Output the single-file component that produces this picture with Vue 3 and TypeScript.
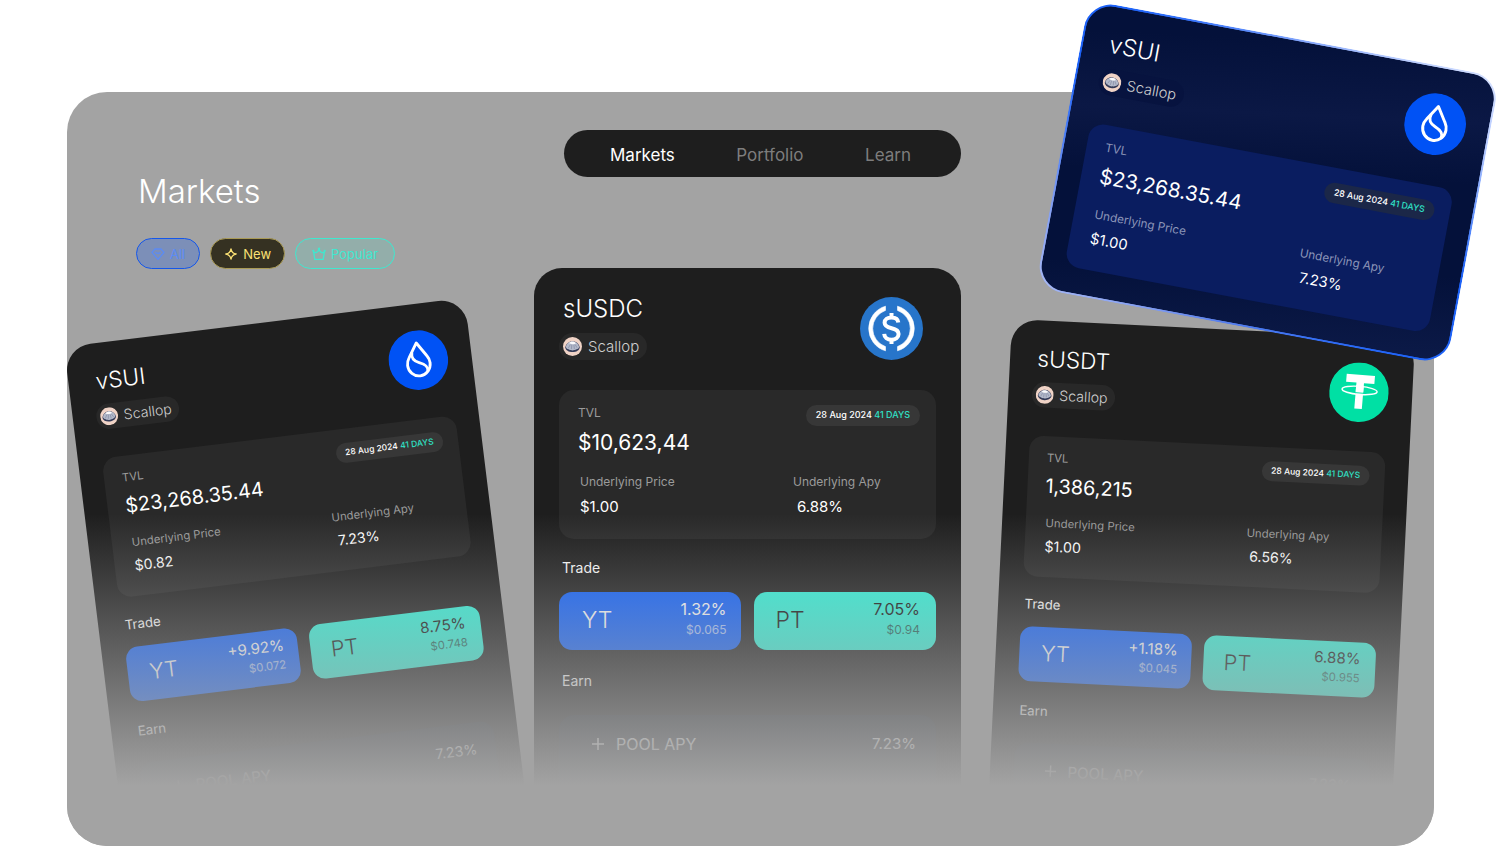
<script setup lang="ts">
type Coin = 'sui' | 'usdc' | 'usdt'

interface Leg {
  rate: string
  price: string
}

interface Market {
  id: string
  name: string
  coin: Coin
  place: 'left' | 'middle' | 'right' | 'featured'
  tvl: string
  price: string
  apy: string
  yt?: Leg
  pt?: Leg
}

const tabs: string[] = ['Markets', 'Portfolio', 'Learn']

const filters: { id: string; label: string }[] = [
  { id: 'all', label: 'All' },
  { id: 'new', label: 'New' },
  { id: 'popular', label: 'Popular' },
]

const markets: Market[] = [
  {
    id: 'vsui', name: 'vSUI', coin: 'sui', place: 'left',
    tvl: '$23,268.35.44', price: '$0.82', apy: '7.23%',
    yt: { rate: '+9.92%', price: '$0.072' }, pt: { rate: '8.75%', price: '$0.748' },
  },
  {
    id: 'susdc', name: 'sUSDC', coin: 'usdc', place: 'middle',
    tvl: '$10,623,44', price: '$1.00', apy: '6.88%',
    yt: { rate: '1.32%', price: '$0.065' }, pt: { rate: '7.05%', price: '$0.94' },
  },
  {
    id: 'susdt', name: 'sUSDT', coin: 'usdt', place: 'right',
    tvl: '1,386,215', price: '$1.00', apy: '6.56%',
    yt: { rate: '+1.18%', price: '$0.045' }, pt: { rate: '6.88%', price: '$0.955' },
  },
  {
    id: 'featured', name: 'vSUI', coin: 'sui', place: 'featured',
    tvl: '$23,268.35.44', price: '$1.00', apy: '7.23%',
  },
]
</script>

<template>
  <div class="page">
    <main class="panel">
      <nav class="nav" aria-label="Main">
        <a v-for="(tab, i) in tabs" :key="tab" href="#" :class="{ active: i === 0 }">{{ tab }}</a>
      </nav>
      <h1>Markets</h1>
      <div class="filters">
        <button v-for="f in filters" :key="f.id" type="button" class="chip" :class="f.id">
          <svg v-if="f.id === 'all'" viewBox="0 0 14 14" aria-hidden="true">
            <path d="M4 2h6l3 3.4L7 12.4 1 5.4zM4.400 5.300c1.600 1.300 3.600 1.300 5.200 0" />
          </svg>
          <svg v-else-if="f.id === 'new'" viewBox="0 0 14 14" aria-hidden="true">
            <path d="M7 1.800C7.500 5 9 6.500 12.200 7 9 7.500 7.500 9 7 12.200 6.500 9 5 7.500 1.800 7 5 6.500 6.500 5 7 1.800z" />
          </svg>
          <svg v-else viewBox="0 0 14 14" aria-hidden="true">
            <path d="M1.600 4.600C3 6.600 5.400 5.800 7 2.600c1.600 3.200 4 4 5.400 2l-1.200 7.800H2.800z" />
            <circle cx="7" cy="1.800" r=".6" />
            <circle cx="1.300" cy="3.800" r=".5" />
            <circle cx="12.700" cy="3.800" r=".5" />
          </svg>
          {{ f.label }}
        </button>
      </div>
      <div class="deck-space"></div>
    </main>

    <div class="deck">
      <article v-for="m in markets" :key="m.id" class="card" :class="m.place">
        <header>
          <div>
            <h2>{{ m.name }}</h2>
            <span class="protocol">
              <svg viewBox="0 0 20 20" aria-hidden="true">
                <circle cx="10" cy="10" r="10" fill="#f0d3c6" />
                <path d="M2.400 11C3 7.400 6 4.600 10 4.400c4 .1 7 2.800 7.600 6.600-.4 2.900-3.600 4.900-7.600 4.900s-7.200-2-7.600-4.900z" fill="#343b58" />
                <path d="M3 10.400C3.600 7 6.400 4.900 10 4.800c3.700.1 6.400 2.200 7 5.600-.4 1.700-1.700 2-2.700 2.600-1 .3-1.600 1-2.500.7-1.200.6-2.400.6-3.600 0-1 .3-1.700-.2-2.400-.8-1.200-.2-2.200-1-2.800-2.500z" fill="#b3b9ca" />
                <path d="M6.400 6.400C8 4.200 12 4.200 13.600 6.500c-1.700 1.500-5.500 1.500-7.200-.1z" fill="#fbfbfd" />
                <path d="M5.600 11.800 7.600 8M8.800 12.800l.5-4.600M12 12.600l-.6-4.400M14.800 11.300l-2-3.300" stroke="#7a829c" stroke-width=".6" fill="none" />
              </svg>
              Scallop
            </span>
          </div>
          <svg class="coin" viewBox="0 0 63 63" role="img" :aria-label="m.coin">
            <template v-if="m.coin === 'sui'">
              <circle cx="31.500" cy="31.500" r="31.500" fill="#0052f5" />
              <path class="drop" d="M31.500 13.200 41 28c1.800 2.600 2.500 5 2.500 7.800a12 12.400 0 0 1-24 0c0-2.800.7-5.200 2.500-7.800z" />
              <path class="drop" d="M25.600 22.600c-1.600 6 .6 9.200 6.400 11.600 6 2.400 9.400 5 8 10.400" />
            </template>
            <template v-else-if="m.coin === 'usdc'">
              <circle cx="31.500" cy="31.500" r="31.500" fill="#2775ca" />
              <path d="M25.500 9.200v4.200a19.200 19.200 0 0 0 0 36.200v4.200a23.200 23.200 0 0 1 0-44.600zM37.500 9.200v4.200a19.200 19.200 0 0 1 0 36.200v4.200a23.200 23.200 0 0 0 0-44.600z" fill="#fff" stroke="#fff" stroke-width=".6" stroke-linejoin="round" />
              <path d="M38.300 25.500c-.3-3.300-3-5.100-6.800-5.100-4 0-6.900 2-6.900 5.300 0 3.700 3.400 4.700 7 5.500 3.900.8 7 2 7 5.900 0 3.500-3.100 5.600-7.100 5.600-4.200 0-7.100-2.100-7.300-5.800M31.500 16v4.400M31.500 42.500V47" fill="none" stroke="#fff" stroke-width="4" />
            </template>
            <template v-else>
              <circle cx="31.500" cy="31.500" r="31.500" fill="#00e0a4" />
              <g transform="rotate(2 31.500 31.500)">
                <path d="M17 13h30v8.500H36V49h-8V21.500H17z" fill="#fff" />
                <ellipse cx="32" cy="29.500" rx="18.600" ry="4.300" fill="none" stroke="#fff" stroke-width="1.500" />
                <path d="M28 24.200h8v7h-8z" fill="#fff" />
                <path d="M27.500 32.200h9" stroke="#00e0a4" stroke-width="1" />
              </g>
            </template>
          </svg>
        </header>

        <section class="stats">
          <div class="top">
            <div class="tvl">
              <span class="label">TVL</span>
              <strong>{{ m.tvl }}</strong>
            </div>
            <span class="date">28 Aug 2024 <b>41 DAYS</b></span>
          </div>
          <div class="figures">
            <div>
              <span class="label">Underlying Price</span>
              <span class="value">{{ m.price }}</span>
            </div>
            <div class="apy">
              <span class="label">Underlying Apy</span>
              <span class="value">{{ m.apy }}</span>
            </div>
          </div>
        </section>

        <template v-if="m.yt && m.pt">
          <h3>Trade</h3>
          <div class="trade">
            <button type="button" class="leg yt">
              <span class="kind">YT</span>
              <span class="quote"><span>{{ m.yt.rate }}</span><small>{{ m.yt.price }}</small></span>
            </button>
            <button type="button" class="leg pt">
              <span class="kind">PT</span>
              <span class="quote"><span>{{ m.pt.rate }}</span><small>{{ m.pt.price }}</small></span>
            </button>
          </div>
          <h3 class="earn">Earn</h3>
          <button type="button" class="pool">
            <svg viewBox="0 0 12 12" aria-hidden="true"><path d="M6 0v12M0 6h12" /></svg>
            <span>POOL APY</span>
            <span class="pool-rate">7.23%</span>
          </button>
        </template>
      </article>
      <div class="fade"></div>
    </div>
  </div>
</template>

<style>
body {
  margin: 0;
  background: #fff;
}
</style>

<style scoped>
.page {
  position: relative;
  padding: 92px 66px 0 67px;
  overflow: hidden;
  font-family: Inter, "Liberation Sans", sans-serif;
  color: #fff;
}

.panel {
  display: flex;
  flex-direction: column;
  padding: 38px 6px 0 0;
  border-radius: 40px;
  background: #a3a3a3;
}

.deck-space {
  height: 577px;
}

.nav {
  display: flex;
  align-self: center;
  align-items: center;
  justify-content: space-between;
  box-sizing: border-box;
  width: 397px;
  height: 47px;
  margin-left: 30px;
  padding: 2px 50px 0 46px;
  border-radius: 24px;
  background: #1e1e1e;
  font-size: 17px;
}

.nav a {
  color: #7d7d7d;
  text-decoration: none;
}

.nav a.active {
  color: #fff;
}

h1 {
  margin: -4px 0 0 71px;
  font-size: 33px;
  line-height: 36px;
  font-weight: 300;
}

.filters {
  display: flex;
  gap: 10px;
  margin: 29px 0 0 69px;
}

.chip {
  display: flex;
  align-items: center;
  gap: 5px;
  box-sizing: border-box;
  height: 31px;
  padding: 0 14px;
  border: 1px solid;
  border-radius: 16px;
  font: 400 13px/16px Inter, "Liberation Sans", sans-serif;
}

.chip svg {
  width: 14px;
  height: 14px;
  fill: none;
  stroke: currentColor;
  stroke-width: 1.3;
  stroke-linejoin: round;
}

.chip.all {
  border-color: #1557ea;
  background: #7c8fb8;
  color: #5b8bf5;
}

.chip.new {
  padding: 0 13px;
  border-color: #a99a55;
  background: #353122;
  color: #fbe174;
}

.chip.popular {
  padding: 0 16px;
  border-color: #3fe8cf;
  background: #93aeaa;
  color: #3fe8cf;
}

.deck {
  position: absolute;
  inset: 268px 66px auto 67px;
  display: grid;
  grid-template-columns: repeat(3, 427px);
  justify-content: center;
  align-items: start;
  gap: 43px;
  height: 578px;
  padding-right: 6px;
}

.card {
  box-sizing: border-box;
  width: 427px;
  padding: 25px;
  border-radius: 28px;
  background: #1e1e1e;
  transform-origin: 0 0;
}

.card.left {
  transform: translate(0, 79px) rotate(-7deg) scale(0.945);
}

.card.right {
  transform: translate(8px, 51px) rotate(2.8deg) scale(0.945);
}

.card.featured {
  position: absolute;
  z-index: 2;
  top: -268px;
  left: calc(100% - 345px);
  width: 427px;
  height: 299px;
  padding: 23px;
  border: 2px solid transparent;
  background:
    linear-gradient(172deg, #04113a 8%, #0b1845 30%, #04113a 48%, #04113a 75%, #0c1a48 100%) padding-box,
    conic-gradient(#7ea2fb 0deg, #d3dfff 55deg, #b6caff 70deg, #1e63f8 105deg, #1e63f8 130deg, #5c82ec 190deg, #a4b6f4 235deg, #7f9cf2 255deg, #1e63f8 290deg, #1e63f8 310deg, #7ea2fb 360deg) border-box;
  transform: rotate(10.6deg) scale(0.98);
}

.card header {
  display: flex;
  justify-content: space-between;
  height: 97px;
}

.card h2 {
  margin: 0 0 8px 4px;
  font-size: 24px;
  line-height: 32px;
  font-weight: 300;
}

.protocol {
  display: flex;
  align-items: center;
  gap: 6px;
  height: 27px;
  padding: 0 8px 0 4px;
  border-radius: 14px;
  background: #282828;
  color: #cfcfcf;
  font-size: 15px;
  font-weight: 300;
}

.protocol svg {
  width: 19px;
  height: 19px;
}

.featured .protocol {
  background: #07133f;
}

.coin {
  width: 63px;
  height: 63px;
  margin-top: 3px;
}

.middle .coin {
  margin: 4px 13px 0 0;
}

.drop {
  fill: none;
  stroke: #fff;
  stroke-width: 3;
  stroke-linejoin: round;
}

.stats {
  box-sizing: border-box;
  height: 149px;
  padding: 15px 16px 0 19px;
  border-radius: 15px;
  background: #292929;
}

.featured .stats {
  background: #0a1d60;
}

.top {
  display: flex;
  align-items: flex-start;
  justify-content: space-between;
}

.label {
  display: block;
  color: #9b9b9b;
  font-size: 12px;
  line-height: 16px;
}

.featured .label {
  color: #8c95b8;
}

.tvl strong {
  display: block;
  margin-top: 9px;
  font-size: 21px;
  line-height: 26px;
  font-weight: 400;
}

.date {
  height: 21px;
  padding: 0 10px;
  border-radius: 11px;
  background: #373737;
  font-size: 9px;
  line-height: 20px;
  font-weight: 500;
}

.date b {
  color: #2fe0c5;
  font-weight: 500;
}

.featured .date {
  background: #1b2748;
}

.figures {
  display: flex;
  margin: 18px 0 0 2px;
}

.figures > div {
  flex: none;
  width: 213px;
}

.figures > .apy {
  width: 120px;
}

.value {
  display: block;
  margin-top: 7px;
  font-size: 15px;
  line-height: 20px;
}

.apy .value {
  margin-left: 4px;
}

h3 {
  margin: 19px 0 14px 3px;
  font-size: 14px;
  line-height: 20px;
  font-weight: 400;
}

.trade {
  display: flex;
  gap: 13px;
}

.leg {
  display: flex;
  flex: 1;
  align-items: center;
  justify-content: space-between;
  height: 58px;
  padding: 0 14px 2px 23px;
  border: 0;
  border-radius: 13px;
  background: #0d60ff;
  color: #fff;
  font: 300 16px/20px Inter, "Liberation Sans", sans-serif;
}

.leg.pt {
  padding: 0 16px 2px 22px;
  background: #30f6dc;
  color: #111;
}

.kind {
  font-size: 23px;
  line-height: 28px;
}

.quote {
  display: flex;
  flex-direction: column;
  align-items: flex-end;
  font-weight: 400;
}

.quote small {
  font-size: 12px;
  line-height: 22px;
  opacity: 0.65;
}

h3.earn {
  margin: 21px 0 24px 3px;
}

.pool {
  display: flex;
  align-items: flex-start;
  box-sizing: border-box;
  width: 100%;
  height: 98px;
  padding: 19px 20px 0 33px;
  border: 0;
  border-radius: 15px;
  background: #1d2229;
  color: #fff;
  font: 400 16px/20px Inter, "Liberation Sans", sans-serif;
}

.pool svg {
  width: 12px;
  height: 20px;
  margin-right: 12px;
  fill: none;
  stroke: currentColor;
  stroke-width: 1.5;
}

.pool-rate {
  margin-left: auto;
  font-size: 15px;
}

.fade {
  position: absolute;
  z-index: 1;
  inset: 246px 0 0;
  border-radius: 0 0 40px 40px;
  background: linear-gradient(rgba(163, 163, 163, 0), #a3a3a3 271px);
}
</style>
